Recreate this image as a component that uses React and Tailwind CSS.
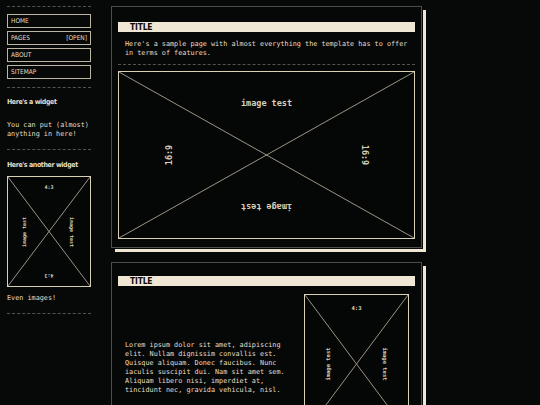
import React from "react";

const cond = "font-['Liberation_Sans_Narrow','DejaVu_Sans_Condensed',sans-serif]";
const mono = "font-['DejaVu_Sans_Mono','Liberation_Mono',monospace]";

function Dash({ className = "" }) {
  return <div className={"border-t border-dashed border-[#55534d] " + className} />;
}

function Ph({ className, fs, top, bottom, left, right, topText, sideText }) {
  return (
    <div className={"relative border border-[#d9d0b8] bg-[#050706] " + className}>
      <svg className="absolute inset-0 w-full h-full" viewBox="0 0 100 100" preserveAspectRatio="none">
        <line x1="0" y1="0" x2="100" y2="100" stroke="#9c9483" strokeWidth="1" vectorEffect="non-scaling-stroke" />
        <line x1="100" y1="0" x2="0" y2="100" stroke="#9c9483" strokeWidth="1" vectorEffect="non-scaling-stroke" />
      </svg>
      <div className={"absolute left-0 right-0 text-center text-[#d9d0b8] font-bold whitespace-nowrap " + mono + " " + fs + " " + top}>{topText}</div>
      <div className={"absolute left-0 right-0 text-center text-[#d9d0b8] font-bold whitespace-nowrap rotate-180 " + mono + " " + fs + " " + bottom}>{topText}</div>
      <div className={"absolute top-1/2 -translate-x-1/2 -translate-y-1/2 -rotate-90 text-[#d9d0b8] font-bold whitespace-nowrap " + mono + " " + fs + " " + left}>{sideText}</div>
      <div className={"absolute top-1/2 translate-x-1/2 -translate-y-1/2 rotate-90 text-[#d9d0b8] font-bold whitespace-nowrap " + mono + " " + fs + " " + right}>{sideText}</div>
    </div>
  );
}

function NavItem({ label, extra }) {
  return (
    <div className={"h-[14px] border border-[#bdb6a4] flex items-center justify-between px-[3px] text-[6.5px] leading-none text-[#e6dec9] uppercase " + cond}>
      <span>{label}</span>
      {extra && <span>{extra}</span>}
    </div>
  );
}

function Title() {
  return (
    <div className={"h-[10px] bg-[#efe7d3] text-[#0b0b0b] font-bold text-[8.5px] leading-[10px] pl-[12px] tracking-[-0.2px] " + cond}>TITLE</div>
  );
}

function Card({ children, className = "" }) {
  return (
    <div className={"border border-[#4d4c48] bg-[#060807] shadow-[1px_1px_0_#070908,4px_4px_0_#efe7d3] px-[6px] pb-[8px] " + className}>
      {children}
    </div>
  );
}

export default function App() {
  return (
    <div className="min-h-screen bg-[#070908] flex gap-[20px] px-[7px] pt-[6px] text-[#e6dec9]">
      <aside className="w-[84px] shrink-0 flex flex-col">
        <Dash />
        <div className="mt-[7px] flex flex-col gap-[3px]">
          <NavItem label="Home" />
          <NavItem label="Pages" extra="[open]" />
          <NavItem label="About" />
          <NavItem label="Sitemap" />
        </div>
        <Dash className="mt-[8px]" />
        <div className={"mt-[9px] font-bold text-[7px] leading-[10px] tracking-[-0.4px] whitespace-nowrap " + cond}>Here's a widget</div>
        <div className={"mt-[14px] text-[6.8px] leading-[9px] " + mono}>You can put (almost) anything in here!</div>
        <Dash className="mt-[10px]" />
        <div className={"mt-[10px] font-bold text-[7px] leading-[10px] tracking-[-0.4px] whitespace-nowrap " + cond}>Here's another widget</div>
        <Ph
          className="mt-[6px] w-[84px] h-[111px]"
          fs="text-[5px] leading-[6px]"
          top="top-[7px]"
          bottom="bottom-[7px]"
          left="left-[16px]"
          right="right-[18px]"
          topText="4:3"
          sideText="image test"
        />
        <div className={"mt-[7px] text-[6.8px] leading-[9px] " + mono}>Even images!</div>
        <Dash className="mt-[10px]" />
      </aside>

      <main className="w-[311px] shrink-0 flex flex-col gap-[14px]">
        <Card className="pt-[15px]">
          <Title />
          <p className={"mt-[8px] px-[7px] text-[6.8px] leading-[9px] " + mono}>
            Here's a sample page with almost everything the template has to offer in terms of features.
          </p>
          <Dash className="mt-[6px]" />
          <Ph
            className="mt-[6px] w-full h-[168px]"
            fs="text-[8.5px] leading-[10px]"
            top="top-[26px]"
            bottom="bottom-[26px]"
            left="left-[50px]"
            right="right-[49px]"
            topText="image test"
            sideText="16:9"
          />
        </Card>
        <Card className="pt-[13px]">
          <Title />
          <div className="mt-[8px] flex justify-between items-center">
            <p className={"mt-[7px] w-[177px] pl-[7px] text-[6.8px] leading-[9px] " + mono}>
              Lorem ipsum dolor sit amet, adipiscing elit. Nullam dignissim convallis est. Quisque aliquam. Donec faucibus. Nunc iaculis suscipit dui. Nam sit amet sem. Aliquam libero nisi, imperdiet at, tincidunt nec, gravida vehicula, nisl.
            </p>
            <Ph
              className="mr-[6px] w-[105px] h-[140px] shrink-0"
              fs="text-[5.5px] leading-[6px]"
              top="top-[10px]"
              bottom="bottom-[10px]"
              left="left-[23px]"
              right="right-[23px]"
              topText="4:3"
              sideText="image test"
            />
          </div>
        </Card>
      </main>
    </div>
  );
}
